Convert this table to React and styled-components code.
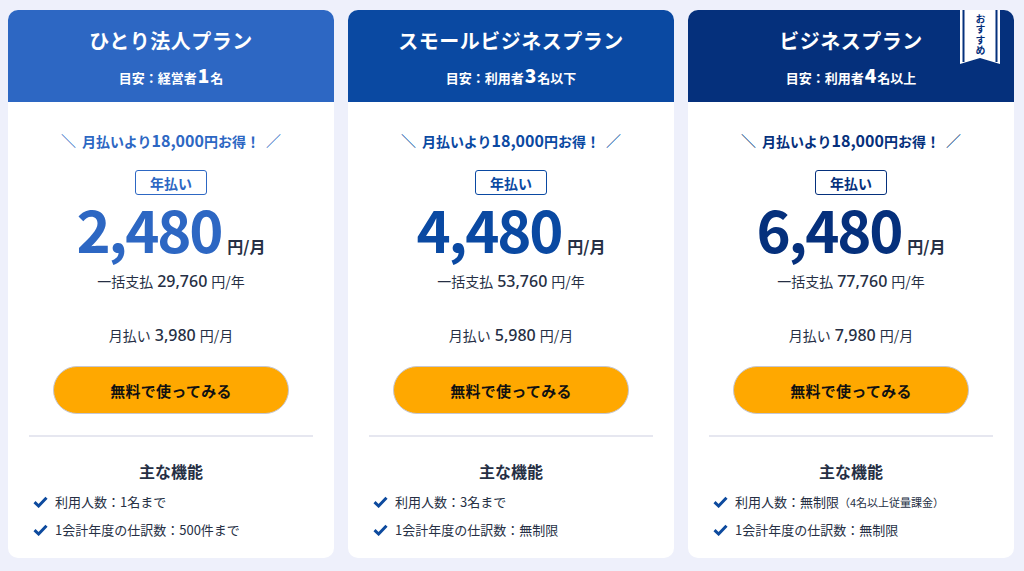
import React from "react";
import styled, { createGlobalStyle } from "styled-components";

const Global = createGlobalStyle`
  html, body { margin: 0; padding: 0; }
  body {
    background: #eef0fb;
    font-family: "Noto Sans CJK JP", "Noto Sans", sans-serif;
    color: #262f44;
  }
`;

const Page = styled.div`
  display: grid;
  grid-template-columns: repeat(3, 326px);
  column-gap: 14px;
  padding: 10px 8px 13px 8px;
`;

const Card = styled.section`
  position: relative;
  background: #fff;
  border-radius: 10px;
  overflow: hidden;
  height: 548px;
  display: flex;
  flex-direction: column;
`;

const Header = styled.header`
  background: ${(p) => p.$color};
  color: #fff;
  height: 92px;
  box-sizing: border-box;
  padding-top: 16px;
  display: flex;
  flex-direction: column;
  align-items: center;
`;

const Title = styled.h2`
  margin: 0;
  font-size: 20px;
  line-height: 30px;
  font-weight: 700;
  letter-spacing: 0.5px;
`;

const Sub = styled.div`
  margin-top: 8px;
  font-size: 13px;
  line-height: 22px;
  font-weight: 700;
  display: flex;
  align-items: baseline;
`;

const SubNum = styled.span`
  font-size: 19px;
  font-weight: 900;
  margin: 0 1px;
`;

const Body = styled.div`
  flex: 1;
  display: flex;
  flex-direction: column;
  align-items: center;
  padding: 28px 21px 0;
`;

const Promo = styled.div`
  font-size: 14px;
  line-height: 20px;
  font-weight: 700;
  color: ${(p) => p.$color};
  display: flex;
  align-items: baseline;
  gap: 6px;
`;

const PromoNum = styled.span`
  font-size: 16px;
`;

const Slash = styled.span`
  font-weight: 400;
  color: ${(p) => p.$color};
  font-size: 15px;
`;

const Badge = styled.div`
  margin-top: 19px;
  width: 72px;
  height: 25px;
  box-sizing: border-box;
  border: 1.5px solid ${(p) => p.$color};
  border-radius: 3px;
  color: ${(p) => p.$color};
  font-size: 14px;
  font-weight: 700;
  display: flex;
  align-items: center;
  justify-content: center;
`;

const PriceRow = styled.div`
  margin-top: 8px;
  display: flex;
  align-items: baseline;
  gap: 6px;
  height: 50px;
`;

const Price = styled.span`
  font-family: "Noto Sans CJK JP", "Noto Sans", sans-serif;
  font-size: 58px;
  line-height: 50px;
  font-weight: 700;
  letter-spacing: -2.2px;
  color: ${(p) => p.$color};
`;

const PriceUnit = styled.span`
  font-size: 16px;
  line-height: 20px;
  font-weight: 700;
  color: #262f44;
`;

const Line = styled.div`
  margin-top: ${(p) => p.$mt}px;
  font-size: 14px;
  line-height: 24px;
  display: flex;
  align-items: baseline;
  gap: 4px;
  color: #262f44;
`;

const LineNum = styled.span`
  font-family: "Noto Sans", sans-serif;
  font-size: 16px;
  font-weight: 500;
`;

const CTA = styled.button`
  margin-top: 19px;
  width: 236px;
  height: 48px;
  border-radius: 24px;
  background: #ffa800;
  border: 1px solid #c6c7d2;
  font-family: inherit;
  font-size: 15px;
  font-weight: 700;
  color: #111;
  letter-spacing: 0.3px;
  cursor: pointer;
`;

const Divider = styled.hr`
  align-self: stretch;
  margin: 21px 0 0;
  border: none;
  height: 2px;
  background: #e6e7f0;
`;

const FeatTitle = styled.h3`
  margin: 22px 0 0;
  font-size: 16px;
  line-height: 24px;
  font-weight: 700;
  color: #262f44;
`;

const FeatList = styled.ul`
  list-style: none;
  margin: 8px 0 0;
  padding: 0 0 0 4px;
  align-self: stretch;
  display: flex;
  flex-direction: column;
  gap: 6px;
`;

const Feat = styled.li`
  display: flex;
  align-items: center;
  gap: 7px;
  font-size: 13px;
  line-height: 22px;
  color: #262f44;
`;

const Small = styled.span`
  font-size: 11px;
`;

const Ribbon = styled.div`
  position: absolute;
  top: 0;
  right: 14px;
  width: 40px;
  height: 54px;
`;

const RibbonLabel = styled.div`
  position: absolute;
  inset: 4px 0 auto 0;
  display: flex;
  justify-content: center;
`;

const RibbonText = styled.span`
  writing-mode: vertical-rl;
  font-size: 10px;
  font-weight: 700;
  line-height: 12px;
  letter-spacing: 0.5px;
  color: #052f7c;
`;

const Check = () => (
  <svg width="15" height="12" viewBox="0 0 15 12">
    <path d="M1.5 6.2 L5.6 10 L13.5 1.8" fill="none" stroke="#0d4a9e" strokeWidth="3" strokeLinejoin="miter" />
  </svg>
);

const plans = [
  {
    title: "ひとり法人プラン",
    sub: ["目安：経営者", "1", "名"],
    color: "#2d67c3",
    price: "2,480",
    annual: "29,760",
    monthly: "3,980",
    feats: [["利用人数：1名まで"], ["1会計年度の仕訳数：500件まで"]],
  },
  {
    title: "スモールビジネスプラン",
    sub: ["目安：利用者", "3", "名以下"],
    color: "#0a49a2",
    price: "4,480",
    annual: "53,760",
    monthly: "5,980",
    feats: [["利用人数：3名まで"], ["1会計年度の仕訳数：無制限"]],
  },
  {
    title: "ビジネスプラン",
    sub: ["目安：利用者", "4", "名以上"],
    color: "#05307c",
    price: "6,480",
    annual: "77,760",
    monthly: "7,980",
    ribbon: true,
    feats: [["利用人数：無制限", "（4名以上従量課金）"], ["1会計年度の仕訳数：無制限"]],
  },
];

export default function App() {
  return (
    <>
      <Global />
      <Page>
        {plans.map((p) => (
          <Card key={p.title}>
            <Header $color={p.color}>
              <Title>{p.title}</Title>
              <Sub>
                {p.sub[0]}
                <SubNum>{p.sub[1]}</SubNum>
                {p.sub[2]}
              </Sub>
            </Header>
            {p.ribbon && (
              <Ribbon>
                <svg width="40" height="54" viewBox="0 0 40 54">
                  <polygon points="0,0 40,0 40,54 20,48 0,54" fill="#fff" />
                  <rect x="2.5" y="0" width="2" height="52" fill="#05307c" />
                  <rect x="35.5" y="0" width="2" height="52" fill="#05307c" />
                </svg>
                <RibbonLabel>
                  <RibbonText>おすすめ</RibbonText>
                </RibbonLabel>
              </Ribbon>
            )}
            <Body>
              <Promo $color={p.color}>
                <Slash $color={p.color}>＼</Slash>
                <span>
                  月払いより<PromoNum>18,000</PromoNum>円お得！
                </span>
                <Slash $color={p.color}>／</Slash>
              </Promo>
              <Badge $color={p.color}>年払い</Badge>
              <PriceRow>
                <Price $color={p.color}>{p.price}</Price>
                <PriceUnit>円/月</PriceUnit>
              </PriceRow>
              <Line $mt={16}>
                一括支払 <LineNum>{p.annual}</LineNum> 円/年
              </Line>
              <Line $mt={30}>
                月払い <LineNum>{p.monthly}</LineNum> 円/月
              </Line>
              <CTA>無料で使ってみる</CTA>
              <Divider />
              <FeatTitle>主な機能</FeatTitle>
              <FeatList>
                {p.feats.map((f) => (
                  <Feat key={f[0]}>
                    <Check />
                    <span>
                      {f[0]}
                      {f[1] && <Small>{f[1]}</Small>}
                    </span>
                  </Feat>
                ))}
              </FeatList>
            </Body>
          </Card>
        ))}
      </Page>
    </>
  );
}
